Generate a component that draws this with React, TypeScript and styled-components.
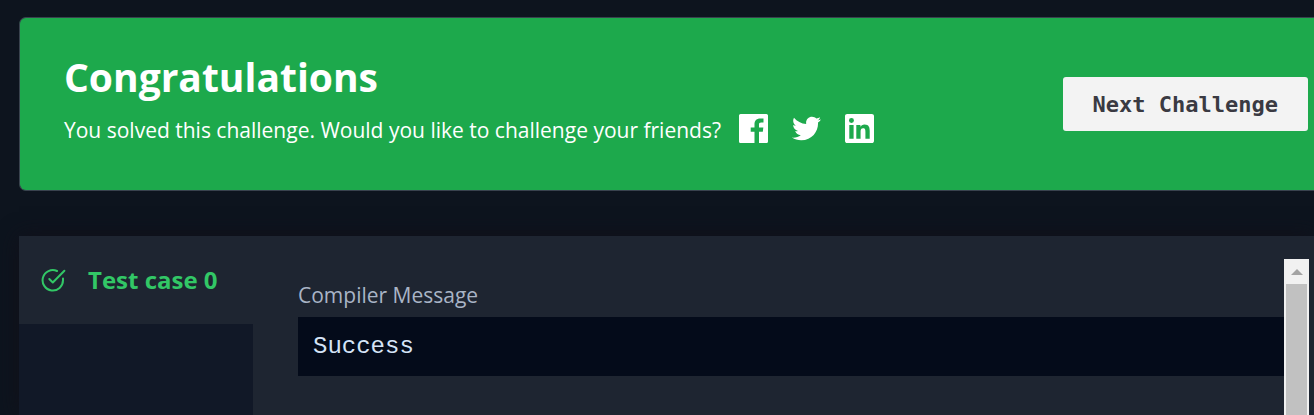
import React from "react";
import styled, { createGlobalStyle } from "styled-components";

const sans = `"Open Sans", "Noto Sans", sans-serif`;

const GlobalStyle = createGlobalStyle`
  * { box-sizing: border-box; }
  body { margin: 0; background: #0d141e; font-family: ${sans}; }
`;

const Page = styled.main`
  display: flex;
  flex-direction: column;
  min-height: 100vh;
  padding: 17px 0 0 19px;
  overflow: hidden;
`;

const Banner = styled.section`
  display: flex;
  align-items: flex-start;
  justify-content: space-between;
  padding: 31px 6px 38px 44px;
  border: 1px solid #39424e;
  border-right: 0;
  border-radius: 7px 0 0 7px;
  background: #1da94c;
  color: #fff;
`;

const Title = styled.h1`
  margin: 0 0 3px;
  font-size: 39px;
  line-height: 56px;
  font-weight: 700;
`;

const ShareRow = styled.div`
  display: flex;
  align-items: center;
  height: 44px;
`;

const ShareText = styled.p`
  margin: 0 18px 0 0;
  font-size: 21px;
  line-height: 44px;
  white-space: nowrap;
`;

const ShareLinks = styled.nav`
  display: flex;
  gap: 24px;
  padding-bottom: 4px;
`;

const ShareLink = styled.a`
  display: block;
  width: 29px;
  height: 29px;
  color: inherit;

  svg { display: block; width: 100%; height: 100%; fill: currentColor; }
`;

const NextButton = styled.button`
  height: 54px;
  margin-top: 28px;
  padding: 2px 30px 0;
  border: 0;
  border-radius: 3px;
  background: #f3f3f3;
  color: #3a3a42;
  font: 700 22px/52px "DejaVu Sans Mono", monospace;
  white-space: nowrap;
  cursor: pointer;
`;

const Results = styled.section`
  display: flex;
  flex: 1;
  margin-top: 45px;
  background: #1e2531;
  box-shadow: 0 0 20px #12101a;
`;

const CaseList = styled.div`
  flex: 0 0 234px;
  background: #111827;
`;

const CaseTab = styled.button`
  display: flex;
  align-items: center;
  gap: 22px;
  width: 100%;
  height: 88px;
  padding: 0 0 0 22px;
  border: 0;
  background: #1e2531;
  color: #32c766;
  font: 700 24px/32px ${sans};
  white-space: nowrap;
  cursor: pointer;

  svg { flex: none; }
`;

const Output = styled.div`
  flex: 1;
  min-width: 0;
  padding: 43px 0 0 45px;
`;

const OutputLabel = styled.h2`
  margin: 0 0 6px;
  color: #a9b4c6;
  font-size: 21px;
  line-height: 32px;
  font-weight: 400;
`;

const OutputText = styled.pre`
  margin: 0;
  padding: 0 15px;
  background: #040b1a;
  color: #d5e4f7;
  font: 400 24px/59px "Liberation Mono", monospace;
`;

const ScrollTrack = styled.div`
  display: flex;
  flex-direction: column;
  flex: 0 0 25px;
  margin: 23px 5px 0 0;
  padding: 0 2px;
  background: #f1f1f1;
`;

const ScrollArrow = styled.span`
  display: flex;
  align-items: center;
  justify-content: center;
  height: 25px;

  svg { display: block; fill: #a3a3a3; }
`;

const ScrollThumb = styled.span`
  flex: 1;
  background: #c1c1c1;
`;

const shares = [
  {
    name: "Facebook",
    path: "M22.676 0H1.324C.593 0 0 .593 0 1.324v21.352C0 23.408.593 24 1.324 24h11.494v-9.294H9.689v-3.621h3.129V8.41c0-3.099 1.894-4.785 4.659-4.785 1.325 0 2.464.097 2.796.141v3.24h-1.921c-1.5 0-1.792.721-1.792 1.771v2.311h3.584l-.465 3.63H16.56V24h6.115c.733 0 1.325-.592 1.325-1.324V1.324C24 .593 23.408 0 22.676 0",
  },
  {
    name: "Twitter",
    path: "M23.954 4.569c-.885.389-1.83.654-2.825.775 1.014-.611 1.794-1.574 2.163-2.723-.951.555-2.005.959-3.127 1.184-.896-.959-2.173-1.559-3.591-1.559-2.717 0-4.92 2.203-4.92 4.917 0 .39.045.765.127 1.124C7.691 8.094 4.066 6.13 1.64 3.161c-.427.722-.666 1.561-.666 2.475 0 1.71.87 3.213 2.188 4.096-.807-.026-1.566-.248-2.228-.616v.061c0 2.385 1.693 4.374 3.946 4.827-.413.111-.849.171-1.296.171-.314 0-.615-.03-.916-.086.631 1.953 2.445 3.377 4.604 3.417-1.68 1.319-3.809 2.105-6.102 2.105-.39 0-.779-.023-1.17-.067 2.189 1.394 4.768 2.209 7.557 2.209 9.054 0 13.999-7.496 13.999-13.986 0-.209 0-.42-.015-.63.961-.689 1.8-1.56 2.46-2.548l-.047-.02z",
  },
  {
    name: "LinkedIn",
    path: "M20.447 20.452h-3.554v-5.569c0-1.328-.027-3.037-1.852-3.037-1.853 0-2.136 1.445-2.136 2.939v5.667H9.351V9h3.414v1.561h.046c.477-.9 1.637-1.85 3.37-1.85 3.601 0 4.267 2.37 4.267 5.455v6.286zM5.337 7.433a2.062 2.062 0 0 1-2.063-2.065 2.064 2.064 0 1 1 2.063 2.065zm1.782 13.019H3.555V9h3.564v11.452zM22.225 0H1.771C.792 0 0 .774 0 1.729v20.542C0 23.227.792 24 1.771 24h20.451C23.2 24 24 23.227 24 22.271V1.729C24 .774 23.2 0 22.222 0h.003z",
  },
];

export default function App() {
  return (
    <>
      <GlobalStyle />
      <Page>
        <Banner>
          <div>
            <Title>Congratulations</Title>
            <ShareRow>
              <ShareText>You solved this challenge. Would you like to challenge your friends?</ShareText>
              <ShareLinks aria-label="Share">
                {shares.map((s) => (
                  <ShareLink key={s.name} href="#" aria-label={s.name}>
                    <svg viewBox="0 0 24 24" aria-hidden="true"><path d={s.path} /></svg>
                  </ShareLink>
                ))}
              </ShareLinks>
            </ShareRow>
          </div>
          <NextButton type="button">Next Challenge</NextButton>
        </Banner>
        <Results>
          <CaseList>
            <CaseTab type="button">
              <svg width="25" height="25" viewBox="0 0 25 25" fill="none" stroke="currentColor" strokeWidth="2" strokeLinecap="round" strokeLinejoin="round" aria-hidden="true">
                <path d="M22 10.5v1.6A10.2 10.2 0 1 1 16 3" />
                <path d="M23.4 2.8 11.8 14.5 8.3 11" />
              </svg>
              Test case 0
            </CaseTab>
          </CaseList>
          <Output>
            <OutputLabel>Compiler Message</OutputLabel>
            <OutputText>Success</OutputText>
          </Output>
          <ScrollTrack aria-hidden="true">
            <ScrollArrow>
              <svg width="12" height="6" viewBox="0 0 12 6"><path d="M6 0 12 6H0z" /></svg>
            </ScrollArrow>
            <ScrollThumb />
          </ScrollTrack>
        </Results>
      </Page>
    </>
  );
}
